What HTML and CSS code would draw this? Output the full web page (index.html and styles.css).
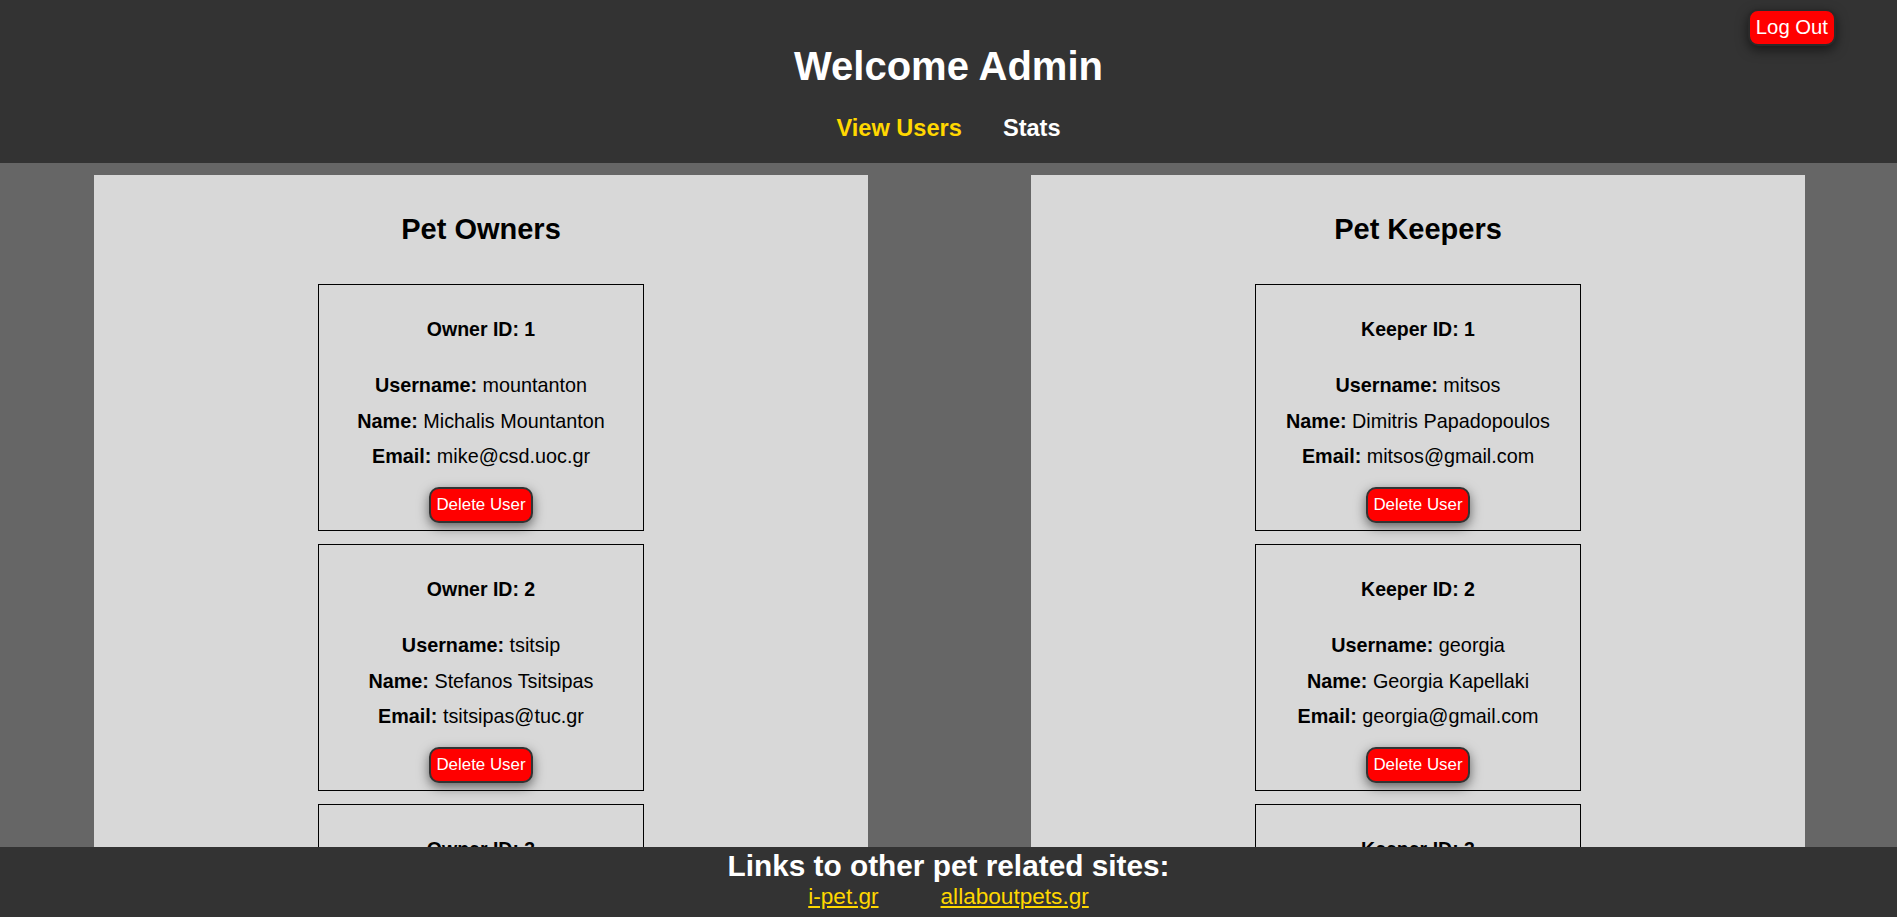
FILE: index.html
```html
<!DOCTYPE html>
<html lang="en">
<head>
<meta charset="utf-8">
<title>Admin</title>
<link rel="stylesheet" href="styles.css">
</head>
<body>
<header class="topbar">
  <h1 class="title">Welcome Admin</h1>
  <nav class="nav">
    <a class="nav-link active" href="#">View Users</a>
    <a class="nav-link" href="#">Stats</a>
  </nav>
  <button class="btn logout">Log Out</button>
</header>

<main class="panels">
  <section class="panel">
    <h2 class="panel-title">Pet Owners</h2>
    <div class="card">
      <h4 class="card-id">Owner ID: 1</h4>
      <p class="row"><b>Username:</b> mountanton</p>
      <p class="row"><b>Name:</b> Michalis Mountanton</p>
      <p class="row"><b>Email:</b> mike@csd.uoc.gr</p>
      <button class="btn del">Delete User</button>
    </div>
    <div class="card">
      <h4 class="card-id">Owner ID: 2</h4>
      <p class="row"><b>Username:</b> tsitsip</p>
      <p class="row"><b>Name:</b> Stefanos Tsitsipas</p>
      <p class="row"><b>Email:</b> tsitsipas@tuc.gr</p>
      <button class="btn del">Delete User</button>
    </div>
    <div class="card">
      <h4 class="card-id">Owner ID: 3</h4>
      <p class="row"><b>Username:</b> papadop</p>
      <p class="row"><b>Name:</b> Nikos Papadopoulos</p>
      <p class="row"><b>Email:</b> nikos@gmail.com</p>
      <button class="btn del">Delete User</button>
    </div>
  </section>

  <section class="panel">
    <h2 class="panel-title">Pet Keepers</h2>
    <div class="card">
      <h4 class="card-id">Keeper ID: 1</h4>
      <p class="row"><b>Username:</b> mitsos</p>
      <p class="row"><b>Name:</b> Dimitris Papadopoulos</p>
      <p class="row"><b>Email:</b> mitsos@gmail.com</p>
      <button class="btn del">Delete User</button>
    </div>
    <div class="card">
      <h4 class="card-id">Keeper ID: 2</h4>
      <p class="row"><b>Username:</b> georgia</p>
      <p class="row"><b>Name:</b> Georgia Kapellaki</p>
      <p class="row"><b>Email:</b> georgia@gmail.com</p>
      <button class="btn del">Delete User</button>
    </div>
    <div class="card">
      <h4 class="card-id">Keeper ID: 3</h4>
      <p class="row"><b>Username:</b> nikos</p>
      <p class="row"><b>Name:</b> Nikos Georgiou</p>
      <p class="row"><b>Email:</b> nikos@gmail.com</p>
      <button class="btn del">Delete User</button>
    </div>
  </section>
</main>

<footer class="footer">
  <h3 class="footer-title">Links to other pet related sites:</h3>
  <div class="footer-links">
    <a href="#">i-pet.gr</a>
    <a href="#">allaboutpets.gr</a>
  </div>
</footer>
</body>
</html>
```

FILE: styles.css
```css
* { box-sizing: border-box; }

html, body {
  margin: 0;
  padding: 0;
}

body {
  background: #666666;
  font-family: "Liberation Sans", Arial, sans-serif;
  color: #000;
}

.topbar {
  position: relative;
  background: #333333;
  text-align: center;
  padding: 43px 0 21px;
}

.title {
  margin: 0;
  color: #fff;
  font-size: 40px;
  line-height: 46px;
  font-weight: bold;
}

.nav {
  margin-top: 26px;
  display: flex;
  justify-content: center;
  gap: 41px;
}

.nav-link {
  color: #fff;
  text-decoration: none;
  font-weight: bold;
  font-size: 23.6px;
  line-height: 27px;
}

.nav-link.active {
  color: #ffd700;
}

.btn {
  font-family: "Liberation Sans", Arial, sans-serif;
  background: #ff0000;
  color: #fff;
  border: 2px solid #333;
  border-radius: 10px;
  cursor: pointer;
  box-shadow: 0 4px 12px rgba(0, 0, 0, 0.55);
}

.logout {
  position: absolute;
  top: 9px;
  right: 61px;
  font-size: 20.3px;
  line-height: 23px;
  padding: 5px 6px 5px;
  border-color: #2a2a2a;
}

.panels {
  display: flex;
  gap: 163px;
  padding: 12px 0 0 94px;
  align-items: flex-start;
}

.panel {
  width: 774px;
  background: #d8d8d8;
  display: flex;
  flex-direction: column;
  align-items: center;
  padding: 37px 0 40px;
}

.panel-title {
  margin: 0 0 38px;
  font-size: 29px;
  line-height: 34px;
  font-weight: bold;
}

.card {
  width: 326px;
  border: 1px solid #000;
  display: flex;
  flex-direction: column;
  align-items: center;
  padding: 33px 0 7px;
  margin-bottom: 13px;
  text-align: center;
}

.card-id {
  margin: 0 0 33px;
  font-size: 19.5px;
  line-height: 23px;
  font-weight: bold;
}

.row {
  margin: 0 0 12.5px;
  font-size: 19.8px;
  line-height: 23px;
  white-space: nowrap;
}

.row:last-of-type {
  margin-bottom: 19px;
}

.del {
  font-size: 16.9px;
  line-height: 20px;
  padding: 6px 5px;
}

.footer {
  position: fixed;
  left: 0;
  right: 0;
  bottom: 0;
  height: 70px;
  background: #333333;
  text-align: center;
  padding-top: 2.5px;
}

.footer-title {
  margin: 0;
  color: #fff;
  font-size: 29.8px;
  line-height: 32px;
  font-weight: bold;
}

.footer-links {
  margin-top: 3px;
  display: flex;
  justify-content: center;
  gap: 62px;
}

.footer-links a {
  color: #ffd700;
  font-size: 22.6px;
  line-height: 24px;
  text-decoration: underline;
}
```
